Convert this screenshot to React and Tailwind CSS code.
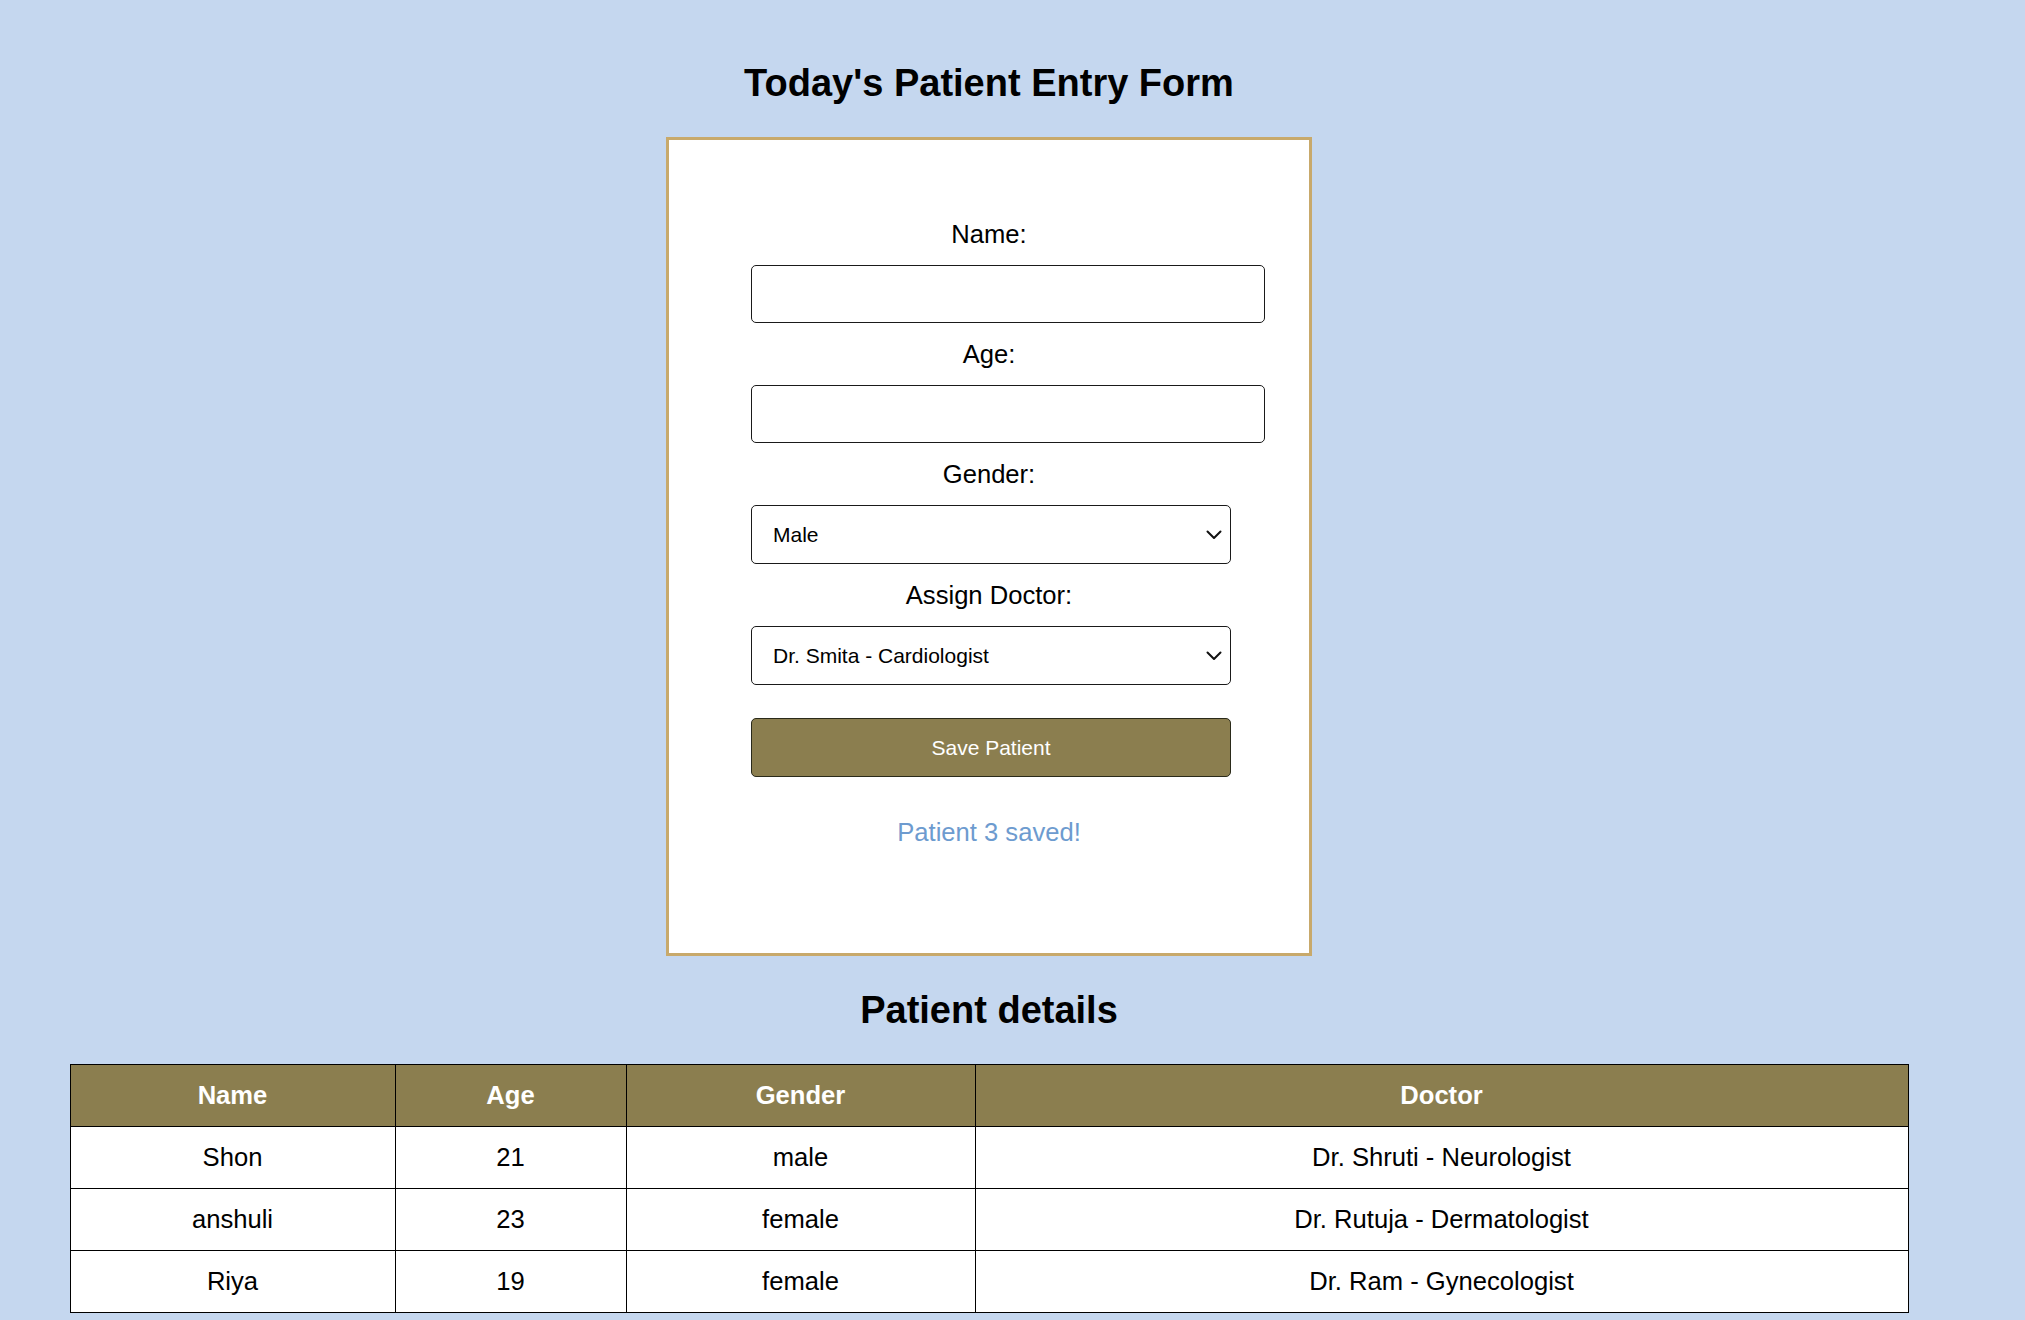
import React from "react";

function Chevron() {
  return (
    <svg
      className="pointer-events-none absolute right-[9px] top-1/2 -translate-y-1/2"
      width="16"
      height="10"
      viewBox="0 0 16 10"
      fill="none"
    >
      <path d="M1.5 1.5 L8 8 L14.5 1.5" stroke="#111" strokeWidth="2" strokeLinecap="round" strokeLinejoin="round" />
    </svg>
  );
}

export default function App() {
  const rows = [
    { name: "Shon", age: "21", gender: "male", doctor: "Dr. Shruti - Neurologist" },
    { name: "anshuli", age: "23", gender: "female", doctor: "Dr. Rutuja - Dermatologist" },
    { name: "Riya", age: "19", gender: "female", doctor: "Dr. Ram - Gynecologist" },
  ];

  const labelCls = "text-[25.6px] leading-[30px] text-black text-center";

  return (
    <div
      className="w-full min-h-[1320px] bg-[#c5d7ef] text-black"
      style={{ fontFamily: '"Liberation Sans", Arial, sans-serif' }}
    >
      <div className="w-[1978px] flex flex-col items-center pt-[61px]">
        <h1 className="text-[38px] leading-[44px] font-bold">Today's Patient Entry Form</h1>

        <div className="mt-[32px] w-[646px] h-[819px] border-[3px] border-[#c8a96b] bg-white flex flex-col items-center pt-[79px]">
          <label className={labelCls}>Name:</label>
          <div className="w-full pl-[82px] mt-[16px]">
            <input className="block w-[514px] h-[58px] border border-[#1a1a1a] rounded-[5px] bg-white outline-none" />
          </div>

          <label className={labelCls + " mt-[16px]"}>Age:</label>
          <div className="w-full pl-[82px] mt-[16px]">
            <input className="block w-[514px] h-[58px] border border-[#1a1a1a] rounded-[5px] bg-white outline-none" />
          </div>

          <label className={labelCls + " mt-[16px]"}>Gender:</label>
          <div className="w-full pl-[82px] mt-[16px]">
            <div className="relative w-[480px] h-[59px]">
              <select
                defaultValue="Male"
                className="appearance-none block w-full h-full border border-[#1a1a1a] rounded-[5px] bg-white pl-[21px] text-[21px] text-black outline-none"
                style={{ fontFamily: '"Liberation Sans", Arial, sans-serif' }}
              >
                <option>Male</option>
                <option>Female</option>
              </select>
              <Chevron />
            </div>
          </div>

          <label className={labelCls + " mt-[16px]"}>Assign Doctor:</label>
          <div className="w-full pl-[82px] mt-[16px]">
            <div className="relative w-[480px] h-[59px]">
              <select
                defaultValue="Dr. Smita - Cardiologist"
                className="appearance-none block w-full h-full border border-[#1a1a1a] rounded-[5px] bg-white pl-[21px] text-[21px] text-black outline-none"
                style={{ fontFamily: '"Liberation Sans", Arial, sans-serif' }}
              >
                <option>Dr. Smita - Cardiologist</option>
                <option>Dr. Shruti - Neurologist</option>
                <option>Dr. Rutuja - Dermatologist</option>
                <option>Dr. Ram - Gynecologist</option>
              </select>
              <Chevron />
            </div>
          </div>

          <div className="w-full pl-[82px] mt-[33px]">
            <button
              className="block w-[480px] h-[59px] border border-[#2a2a1a] rounded-[5px] bg-[#8b7e4f] text-white text-[21px]"
              style={{ fontFamily: '"Liberation Sans", Arial, sans-serif' }}
            >
              Save Patient
            </button>
          </div>

          <p className="mt-[40px] text-[25.6px] leading-[30px] text-[#6d9bcf]">Patient 3 saved!</p>
        </div>

        <h2 className="mt-[32px] text-[38px] leading-[44px] font-bold">Patient details</h2>

        <table className="mt-[32px] w-[1838px] table-fixed border-collapse bg-white text-[25.6px]">
          <colgroup>
            <col className="w-[325px]" />
            <col className="w-[231px]" />
            <col className="w-[349px]" />
            <col className="w-[933px]" />
          </colgroup>
          <thead>
            <tr className="h-[62px] bg-[#8b7e4f] text-white">
              <th className="border border-black font-bold text-center">Name</th>
              <th className="border border-black font-bold text-center">Age</th>
              <th className="border border-black font-bold text-center">Gender</th>
              <th className="border border-black font-bold text-center">Doctor</th>
            </tr>
          </thead>
          <tbody>
            {rows.map((r) => (
              <tr key={r.name} className="h-[62px]">
                <td className="border border-black text-center">{r.name}</td>
                <td className="border border-black text-center">{r.age}</td>
                <td className="border border-black text-center">{r.gender}</td>
                <td className="border border-black text-center">{r.doctor}</td>
              </tr>
            ))}
          </tbody>
        </table>
      </div>
    </div>
  );
}
